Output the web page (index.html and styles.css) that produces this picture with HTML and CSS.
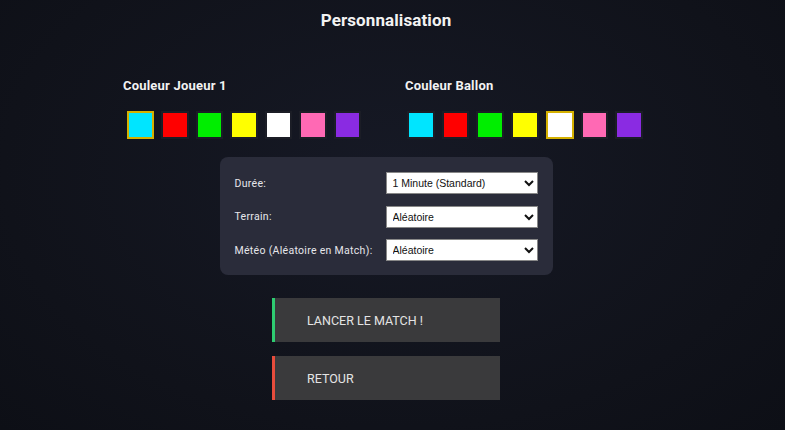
FILE: index.html
```html
<!DOCTYPE html>
<html lang="fr">
<head>
<meta charset="utf-8">
<title>Personnalisation</title>
<link rel="stylesheet" href="styles.css">
</head>
<body>
<main class="page">
  <h1 class="title">Personnalisation</h1>
  <section class="colors">
    <div class="color-col">
      <h2 class="color-label">Couleur Joueur 1</h2>
      <div class="swatches">
        <span class="swatch selected" style="background:#00e5ff"></span>
        <span class="swatch" style="background:#ff0000"></span>
        <span class="swatch" style="background:#00ee00"></span>
        <span class="swatch" style="background:#ffff00"></span>
        <span class="swatch" style="background:#ffffff"></span>
        <span class="swatch" style="background:#ff69b4"></span>
        <span class="swatch" style="background:#8a2be2"></span>
      </div>
    </div>
    <div class="color-col">
      <h2 class="color-label">Couleur Ballon</h2>
      <div class="swatches">
        <span class="swatch" style="background:#00e5ff"></span>
        <span class="swatch" style="background:#ff0000"></span>
        <span class="swatch" style="background:#00ee00"></span>
        <span class="swatch" style="background:#ffff00"></span>
        <span class="swatch selected" style="background:#ffffff"></span>
        <span class="swatch" style="background:#ff69b4"></span>
        <span class="swatch" style="background:#8a2be2"></span>
      </div>
    </div>
  </section>
  <section class="panel">
    <div class="row">
      <label class="row-label">Durée:</label>
      <select class="sel"><option>1 Minute (Standard)</option></select>
    </div>
    <div class="row">
      <label class="row-label">Terrain:</label>
      <select class="sel"><option>Aléatoire</option></select>
    </div>
    <div class="row">
      <label class="row-label">Météo (Aléatoire en Match):</label>
      <select class="sel"><option>Aléatoire</option></select>
    </div>
  </section>
  <div class="actions">
    <button class="btn btn-go">LANCER LE MATCH !</button>
    <button class="btn btn-back">RETOUR</button>
  </div>
</main>
</body>
</html>
```
FILE: styles.css
```css
html, body {
  margin: 0;
  padding: 0;
  height: 100%;
}
body {
  background: radial-gradient(ellipse at 50% 40%, #161925 0%, #10121a 70%, #0d0f16 100%);
  font-family: Roboto, "Liberation Sans", sans-serif;
  color: #f2f2f2;
  overflow: hidden;
}
.page {
  width: 772px;
  display: flex;
  flex-direction: column;
  align-items: center;
}
.title {
  margin: 10px 0 0;
  font-size: 17px;
  font-weight: 700;
  line-height: 20px;
  letter-spacing: 0.1px;
}
.colors {
  align-self: stretch;
  display: flex;
  gap: 44px;
  padding-left: 123px;
  margin-top: 48px;
}
.color-col {
  width: 238px;
}
.color-label {
  margin: 0 0 18px;
  font-size: 13px;
  font-weight: 700;
  line-height: 15px;
  letter-spacing: 0.2px;
}
.swatches {
  display: flex;
  gap: 7px;
  padding-left: 4px;
}
.color-col + .color-col .swatches {
  padding-left: 2px;
}
.swatch {
  width: 28px;
  height: 28px;
  box-sizing: border-box;
  border: 2px solid #1b1d26;
}
.swatch.selected {
  border-color: #d4b000;
}
.panel {
  margin-top: 18px;
  width: 333px;
  box-sizing: border-box;
  padding: 15px 15px 14px;
  background: #2a2c3a;
  border-radius: 8px;
  display: flex;
  flex-direction: column;
  gap: 11.5px;
}
.row {
  display: flex;
  align-items: center;
  justify-content: space-between;
}
.row-label {
  font-size: 10.5px;
  color: #e6e6ea;
  letter-spacing: 0.3px;
}
.sel {
  width: 152px;
  height: 22px;
  font-family: "Liberation Sans", sans-serif;
  font-size: 10.5px;
  background: #ffffff;
  color: #111;
  border: 1px solid #888;
  border-radius: 0;
  padding: 0 2px;
}
.actions {
  margin-top: 23px;
  display: flex;
  flex-direction: column;
  gap: 14px;
}
.btn {
  width: 228px;
  height: 44px;
  box-sizing: border-box;
  background: #3a3a3c;
  border: none;
  border-left: 3px solid #2ecc71;
  color: #e4e4e4;
  font-family: Roboto, "Liberation Sans", sans-serif;
  font-size: 12.5px;
  font-weight: 400;
  text-align: left;
  padding: 0 0 0 32px;
}
.btn-back {
  border-left-color: #e74c3c;
}
```
